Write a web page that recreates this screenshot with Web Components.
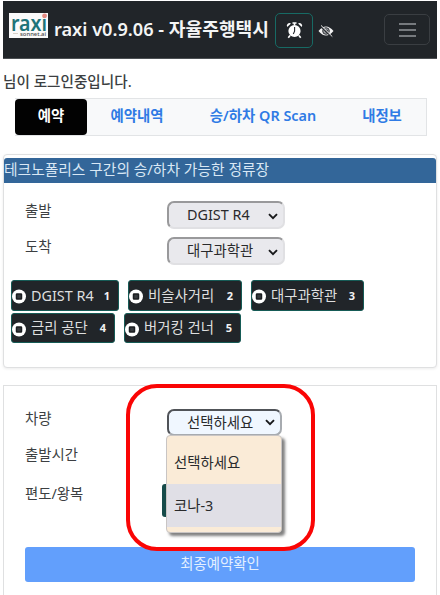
<!DOCTYPE html>
<html lang="ko">
<head>
<meta charset="utf-8">
<title>raxi</title>
<style>
  html { background: #fff; }
  body {
    margin: 0;
    width: 440px;
    height: 595px;
    overflow: hidden;
    color: #3c3f42;
    font-family: "Noto Sans", "Noto Sans CJK KR", sans-serif;
    font-size: 14.4px;
    line-height: 20px;
  }
</style>
</head>
<body>
<raxi-app></raxi-app>

<script>
const define = (name, html, setup) => {
  const template = document.createElement("template");
  template.innerHTML = html;
  customElements.define(name, class extends HTMLElement {
    constructor() {
      super();
      this.root = this.attachShadow({ mode: "open" });
    }

    connectedCallback() {
      this.root.appendChild(template.content.cloneNode(true));
      if (setup) setup(this);
    }
  });
};

define("raxi-logo", /* html */ `
  <style>
    :host { display: block; width: 39px; height: 25px; background: #fafafa; }
    svg { display: block; overflow: visible; }
    .name { font: 600 22px "Noto Sans", sans-serif; fill: #1e7479; }
    .sub { font: 500 5.5px "Noto Sans", sans-serif; fill: #4b4b4b; }
  </style>
  <svg width="39" height="25" viewBox="0 0 39 25">
    <text class="name" x="2" y="17.5" textLength="36" lengthAdjust="spacingAndGlyphs">raxi</text>
    <circle cx="35.6" cy="2.8" r="2.4" fill="#e58b84"/>
    <text class="sub" x="11" y="23" textLength="26" lengthAdjust="spacingAndGlyphs">sonnet.ai</text>
    <path d="M4 20.5h5" stroke="#d8d0c8"/>
  </svg>
`);

define("raxi-navbar", /* html */ `
  <style>
    :host {
      display: flex;
      align-items: flex-start;
      box-sizing: border-box;
      height: 58px;
      padding: 12px 7px 0 6px;
      background: #212529;
      border-bottom: 1px solid #4c5053;
      color: #f4f5f5;
    }
    .title {
      width: 215px;
      margin: 3px 0 0 6px;
      font-size: 18.15px;
      font-weight: 600;
      line-height: 26px;
      white-space: nowrap;
    }
    .alarm {
      box-sizing: border-box;
      width: 38px;
      height: 35px;
      margin-left: 6px;
      border: 1.5px solid #176a64;
      border-radius: 5px;
      display: grid;
      place-items: center;
    }
    .eye { margin: 11px 0 0 5px; }
    .menu {
      box-sizing: border-box;
      width: 46px;
      height: 31px;
      margin: 1px 0 0 auto;
      border: 1px solid #3a3e42;
      border-radius: 5px;
      display: grid;
      place-items: center;
    }
    svg { display: block; }
  </style>
  <raxi-logo></raxi-logo>
  <div class="title"><slot></slot></div>
  <div class="alarm">
    <svg width="17" height="17" viewBox="0 0 17 17">
      <path d="M6.5 1h4M8.5 1v2M4 13.5l-1.7 2.3M13 13.5l1.7 2.3" stroke="#fff" stroke-width="1.6"/>
      <path d="M1.2 5A2.6 2.6 0 0 1 5 1.6zM15.8 5A2.6 2.6 0 0 0 12 1.6z" fill="#fff"/>
      <circle cx="8.5" cy="9" r="6.1" fill="#fff"/>
      <path d="M8.6 5v4.2L7.3 12" fill="none" stroke="#212529" stroke-width="1.1"/>
    </svg>
  </div>
  <svg class="eye" width="16" height="14" viewBox="0 0 16 14">
    <path d="M.5 7Q8-2.2 15.5 7Q8 16.2.5 7z" fill="#f1f1f1"/>
    <circle cx="8" cy="7" r="3.3" fill="#9a9da0" stroke="#212529" stroke-width=".9"/>
    <circle cx="8.6" cy="7" r="1.5" fill="#3a3e42"/>
    <path d="M2.2 2l11.5 11" stroke="#212529" stroke-width="1.2"/>
    <path d="M3 1.4l11.3 11.2" stroke="#e6e6e6" stroke-width="1"/>
  </svg>
  <div class="menu">
    <svg width="17" height="14" viewBox="0 0 17 14">
      <path d="M0 1h17M0 7h17M0 13h17" stroke="#92969a" stroke-width="1.5"/>
    </svg>
  </div>
`);

define("raxi-tabs", /* html */ `
  <style>
    :host {
      display: grid;
      grid-template-columns: 72px 100px 152px 86px;
      box-sizing: border-box;
      width: 412px;
      height: 38px;
      margin: 6px 0 0 12px;
      border: 1px solid #e2e4e6;
      border-width: 1px 1px 1px 0;
      background: #f8f9fa;
    }
  </style>
  <slot></slot>
`);

define("raxi-tab", /* html */ `
  <style>
    :host {
      display: block;
      line-height: 34px;
      text-align: center;
      font-weight: 600;
      color: #2f7be5;
      white-space: nowrap;
    }
    :host([active]) { background: #020202; color: #fff; border-radius: 4px; }
  </style>
  <slot></slot>
`);

define("raxi-card", /* html */ `
  <style>
    :host {
      display: block;
      box-sizing: border-box;
      border: 1px solid #dfe0e1;
      background: #fff;
    }
  </style>
  <slot></slot>
`);

define("raxi-field", /* html */ `
  <style>
    :host { display: flex; align-items: flex-start; padding-left: 21px; height: 36px; }
    .label { width: 142px; }
  </style>
  <div class="label"></div>
  <slot></slot>
`, el => {
  el.root.querySelector(".label").textContent = el.getAttribute("label");
});

define("raxi-select", /* html */ `
  <style>
    :host {
      position: relative;
      display: flex;
      align-items: center;
      box-sizing: border-box;
      width: 118px;
      height: 28px;
      padding: 0 5px 0 18px;
      border: 2px solid #e0e0e3;
      border-top-color: #99999b;
      border-left-color: #99999b;
      border-radius: 7px;
      background: #e9e9ed;
      color: #292a2c;
      white-space: nowrap;
    }
    :host([open]) {
      width: 115px;
      height: 27px;
      background: #f0f7ff;
      border-color: #505358 #a7abb0 #a7abb0 #505358;
    }
    svg { margin: 2px 0 0 auto; }
    :host([open]) svg { margin-top: 0; }
  </style>
  <slot></slot>
  <svg width="10" height="7" viewBox="0 0 10 7">
    <path d="M1 1.2l4 4 4-4" fill="none" stroke="#18191b" stroke-width="1.9"/>
  </svg>
  <slot name="menu"></slot>
`);

define("raxi-menu", /* html */ `
  <style>
    :host {
      position: absolute;
      z-index: 1;
      top: 24px;
      left: -3px;
      box-sizing: border-box;
      width: 116px;
      height: 98px;
      border: 1px solid #c9c5c4;
      border-radius: 4px;
      background: #faebd7;
      box-shadow: 3px 3px 3px rgba(0, 0, 0, .5);
      overflow: hidden;
    }
  </style>
  <slot></slot>
`);

define("raxi-option", /* html */ `
  <style>
    :host { display: block; height: 48px; line-height: 53px; padding-left: 7px; }
    :host([hover]) { height: 43px; line-height: 43px; background: #e0dfe6; }
  </style>
  <slot></slot>
`);

define("raxi-stop", /* html */ `
  <style>
    :host {
      display: flex;
      align-items: center;
      box-sizing: border-box;
      height: 31px;
      padding: 0 8px 0 0;
      border: 1px solid #165b56;
      border-radius: 3px;
      background: #212529;
      color: #dedfdf;
      white-space: nowrap;
    }
    svg { margin: 2px 4px 0 0; }
    b { margin-left: auto; font-size: 11px; font-weight: 700; color: #f2f2f2; }
  </style>
  <svg width="15" height="15" viewBox="0 0 15 15">
    <circle cx="7" cy="7.5" r="7" fill="#fff"/>
    <rect x="4.5" y="5" width="5" height="5" rx=".5" fill="#363a3e" stroke="#1b1e21" stroke-width="1.5"/>
  </svg>
  <slot></slot>
  <b></b>
`, el => {
  el.root.querySelector("b").textContent = el.getAttribute("no");
});

define("raxi-button", /* html */ `
  <style>
    :host {
      display: block;
      width: 390px;
      height: 35px;
      margin-left: 21px;
      border-radius: 3px;
      background: #629ffc;
      color: #e4f0ff;
      line-height: 33px;
      text-align: center;
    }
  </style>
  <slot></slot>
`);

define("raxi-app", /* html */ `
  <style>
    :host {
      display: block;
      position: relative;
      box-sizing: border-box;
      height: 596px;
      padding: 1px 3px 0;
      border-top: 1px solid #dff0eb;
      margin-top: -1px;
      overflow: hidden;
    }
    .login { margin: 12px 0 0; font-size: 14.6px; font-weight: 500; white-space: nowrap; }
    raxi-tabs { margin-top: 7px; }
    .stations { height: 214px; margin-top: 18px; padding-top: 3px; border-radius: 4px; box-shadow: 0 1px 3px rgba(0, 0, 0, .08); }
    .heading {
      height: 25px;
      margin-bottom: 18px;
      border-radius: 3px 3px 0 0;
      background: #336699;
      color: #d9e8f5;
      font-size: 14.75px;
      line-height: 23px;
      white-space: nowrap;
    }
    .row { display: flex; gap: 9px; margin: 7px 0 0 7px; }
    .row + .row { margin-top: 2px; }
    .row + .row raxi-stop { height: 30px; }
    .booking { height: 210px; margin-top: 17px; padding-top: 23px; border-bottom: 0; }
    .trip { width: 100px; height: 33px; margin: 0 0 0 -5px; border-radius: 3px; background: #164b4a; }
    .mark {
      position: absolute;
      z-index: 2;
      left: 126px;
      top: 384px;
      box-sizing: border-box;
      width: 189px;
      height: 167px;
      border: 4px solid #fa0505;
      border-radius: 31px;
    }
  </style>
  <raxi-navbar>raxi v0.9.06 - 자율주행택시</raxi-navbar>
  <p class="login">님이 로그인중입니다.</p>
  <raxi-tabs>
    <raxi-tab active>예약</raxi-tab>
    <raxi-tab>예약내역</raxi-tab>
    <raxi-tab>승/하차 QR Scan</raxi-tab>
    <raxi-tab>내정보</raxi-tab>
  </raxi-tabs>
  <raxi-card class="stations">
    <div class="heading">테크노폴리스 구간의 승/하차 가능한 정류장</div>
    <raxi-field label="출발"><raxi-select>DGIST R4</raxi-select></raxi-field>
    <raxi-field label="도착"><raxi-select>대구과학관</raxi-select></raxi-field>
    <div class="row">
      <raxi-stop no="1" style="width: 108px">DGIST R4</raxi-stop>
      <raxi-stop no="2" style="width: 114px">비슬사거리</raxi-stop>
      <raxi-stop no="3" style="width: 113px">대구과학관</raxi-stop>
    </div>
    <div class="row">
      <raxi-stop no="4" style="width: 104px">금리 공단</raxi-stop>
      <raxi-stop no="5" style="width: 117px">버거킹 건너</raxi-stop>
    </div>
  </raxi-card>
  <raxi-card class="booking">
    <raxi-field label="차량">
      <raxi-select open>선택하세요
        <raxi-menu slot="menu">
          <raxi-option>선택하세요</raxi-option>
          <raxi-option hover>코나-3</raxi-option>
        </raxi-menu>
      </raxi-select>
    </raxi-field>
    <raxi-field label="출발시간" style="height: 39px"></raxi-field>
    <raxi-field label="편도/왕복" style="height: 63px"><div class="trip"></div></raxi-field>
    <raxi-button>최종예약확인</raxi-button>
  </raxi-card>
  <div class="mark"></div>
`);
</script>
</body>
</html>
